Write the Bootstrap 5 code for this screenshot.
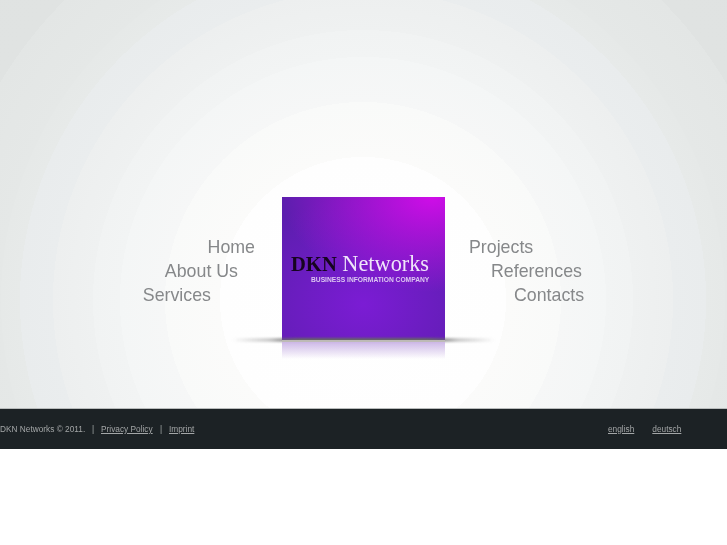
<!DOCTYPE html>
<html lang="en">
<head>
    <meta charset="UTF-8">
    <meta name="viewport" content="width=device-width, initial-scale=1.0">
    <title>DKN Networks</title>
    <link href="https://cdn.jsdelivr.net/npm/bootstrap@5.3.0/dist/css/bootstrap.min.css" rel="stylesheet">
    <style>
        body {
            background-color: #fff;
            font-family: "Liberation Sans", Arial, sans-serif;
        }
        .stage {
            height: 408px;
            padding-top: 197px;
            background: radial-gradient(circle 900px at 363px 300px,
                #fff 0, #fefefe 143px,
                #fbfbfa 143px, #f9faf9 198px,
                #f6f7f7 198px, #f4f6f6 243px,
                #f2f4f4 243px, #f1f3f3 270px,
                #eff1f1 270px, #edefef 310px,
                #eaedee 310px, #e9eced 343px,
                #e7eae9 343px, #e6e9e8 362px,
                #e5e8e7 362px, #e3e6e5 423px,
                #e0e3e2 423px, #dee1e0 900px);
        }
        .menu-list { will-change: transform; }
        .menu-list a {
            display: block;
            font-size: 17.8px;
            line-height: 24px;
            color: #86888a;
            text-decoration: none;
        }
        .menu-left { width: 255px; margin-top: 38px; text-align: right; }
        .menu-right { margin-top: 38px; margin-left: 24px; }
        .shift-1 { margin-right: 17px; }
        .shift-2 { margin-right: 44px; }
        .shift-3 { margin-left: 22px; }
        .shift-4 { margin-left: 45px; }
        .logo-box {
            position: relative;
            width: 163px;
            height: 143px;
            margin-left: 27px;
            background:
                radial-gradient(ellipse 150px 95px at 92% 0, #cf0de8 0, rgba(207, 13, 232, 0) 100%),
                radial-gradient(ellipse 130px 110px at 50% 75%, #7b1cd4 0, rgba(123, 28, 212, 0) 100%),
                #5c1eae;
        }
        .logo-glow {
            position: absolute;
            z-index: -1;
            top: 0;
            left: -59px;
            right: -59px;
            height: 186px;
            background: linear-gradient(to right, rgba(255, 255, 255, .45) 0, #fff 14%, #fff 86%, rgba(255, 255, 255, .45) 100%);
            opacity: .5;
        }
        .logo-name {
            position: absolute;
            top: 55px;
            left: 9px;
            white-space: nowrap;
            font-family: "Liberation Serif", serif;
            font-size: 22.3px;
            line-height: 24px;
            color: #efe5fa;
            filter: blur(.3px);
        }
        .logo-name b { font-size: 20.6px; color: #16041f; }
        .logo-sub {
            position: absolute;
            top: 78px;
            left: 29px;
            white-space: nowrap;
            font-size: 6.7px;
            line-height: 10px;
            font-weight: 700;
            color: #ddc8f2;
            filter: blur(.3px);
        }
        .logo-shadow {
            position: absolute;
            top: 141px;
            left: -50px;
            right: -50px;
            height: 4px;
            filter: blur(1px);
            background: linear-gradient(to right, rgba(120, 120, 120, 0) 0, rgba(120, 120, 120, .35) 14%, #666 26%, #666 74%, rgba(120, 120, 120, .35) 86%, rgba(120, 120, 120, 0) 100%);
        }
        .logo-line {
            position: absolute;
            top: 143px;
            left: 0;
            right: 0;
            height: 2px;
            background: #bdbab6;
        }
        .logo-reflect {
            position: absolute;
            top: 145px;
            left: 0;
            right: 0;
            height: 17px;
            background: linear-gradient(to bottom, #cdb8e7, rgba(235, 225, 245, 0));
        }
        .foot-bar {
            height: 41px;
            font-size: 8.3px;
            color: #a3a6a7;
            background-color: #1c2225;
            border-top: 1px solid #b9bcbc;
        }
        .foot-bar > * { will-change: transform; }
        .foot-bar a { color: #a3a6a7; }
        .foot-sep { margin: 0 7px; }
        .lang-links { margin-left: 413px; }
        .lang-links a { margin-right: 18px; }
    </style>
</head>
<body>
    <div class="stage d-flex align-items-start">
        <nav class="menu-list menu-left">
            <a href="#">Home</a>
            <a href="#" class="shift-1">About Us</a>
            <a href="#" class="shift-2">Services</a>
        </nav>
        <div class="logo-box">
            <div class="logo-glow"></div>
            <div class="logo-shadow"></div>
            <div class="logo-line"></div>
            <div class="logo-reflect"></div>
            <div class="logo-name"><b>DKN</b> Networks</div>
            <div class="logo-sub">BUSINESS INFORMATION COMPANY</div>
        </div>
        <nav class="menu-list menu-right">
            <a href="#">Projects</a>
            <a href="#" class="shift-3">References</a>
            <a href="#" class="shift-4">Contacts</a>
        </nav>
    </div>
    <footer class="foot-bar d-flex align-items-center">
        <span>DKN Networks © 2011.</span>
        <span class="foot-sep">|</span>
        <a href="#">Privacy Policy</a>
        <span class="foot-sep">|</span>
        <a href="#">Imprint</a>
        <div class="lang-links d-flex">
            <a href="#">english</a>
            <a href="#">deutsch</a>
        </div>
    </footer>
    <script src="https://cdn.jsdelivr.net/npm/bootstrap@5.3.0/dist/js/bootstrap.bundle.min.js"></script>
</body>
</html>
